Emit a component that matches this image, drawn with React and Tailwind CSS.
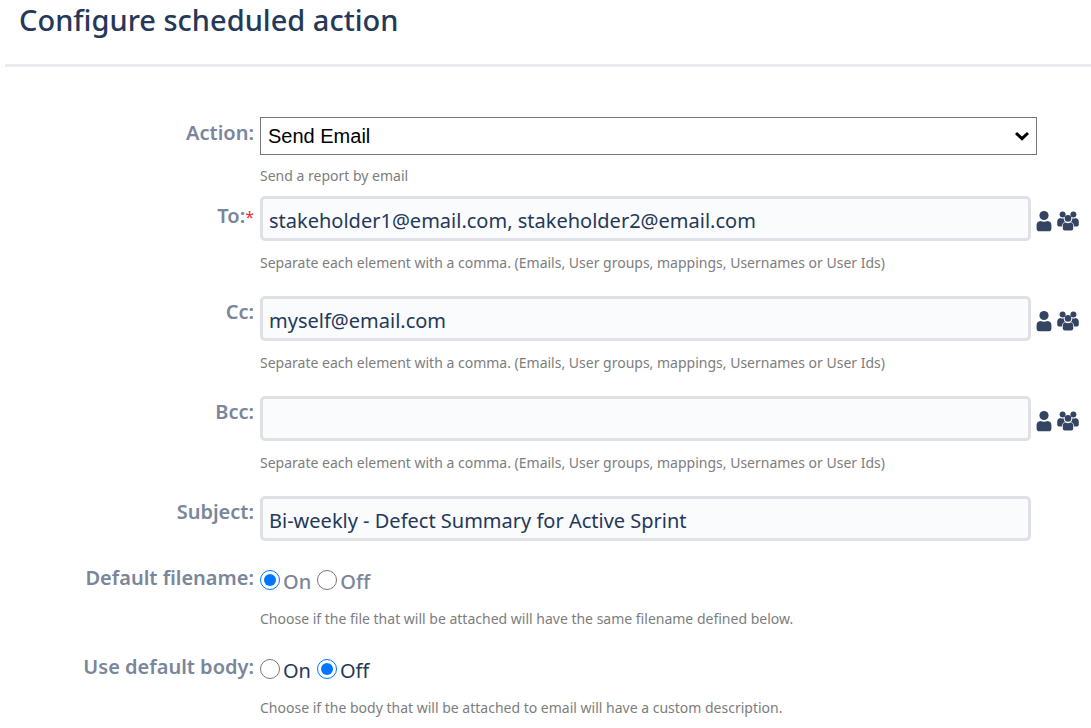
import { useState } from "react";

const ADDRESS_HINT =
  "Separate each element with a comma. (Emails, User groups, mappings, Usernames or User Ids)";

function UserIcon() {
  return (
    <svg width="16" height="22" viewBox="0 0 16 22" fill="currentColor" aria-hidden="true">
      <circle cx="8" cy="5.5" r="4.6" />
      <path d="M4.4 11 Q8 12.4 11.6 11 Q15.4 11.4 15.4 15 V18.4 Q15.4 21.2 12.6 21.2 H3.4 Q0.6 21.2 0.6 18.4 V15 Q0.6 11.4 4.4 11 Z" />
    </svg>
  );
}

function GroupIcon() {
  return (
    <svg width="22" height="22" viewBox="0 0 22 22" fill="currentColor" aria-hidden="true">
      <circle cx="5.6" cy="4.4" r="3" />
      <circle cx="16.4" cy="4.4" r="3" />
      <path d="M3.4 8 Q4.8 8.9 6.6 8.2 Q6.8 11 8.2 12 Q5 12.8 5 16.6 H2 Q0.2 16.6 0.2 14.6 V12 Q0.2 8.6 3.4 8 Z" />
      <path d="M18.6 8 Q17.2 8.9 15.4 8.2 Q15.2 11 13.8 12 Q17 12.8 17 16.6 H20 Q21.8 16.6 21.8 14.6 V12 Q21.8 8.6 18.6 8 Z" />
      <circle cx="11" cy="8.4" r="3.3" />
      <path d="M8.4 12.6 Q11 14 13.6 12.6 Q16.2 13 16.2 16 V18.4 Q16.2 20.4 14.2 20.4 H7.8 Q5.8 20.4 5.8 18.4 V16 Q5.8 13 8.4 12.6 Z" />
    </svg>
  );
}

function Row({ children, className }) {
  return <div className={`grid grid-cols-[254px_1fr] gap-x-1.5 ${className || ""}`}>{children}</div>;
}

function Hint({ id, children }) {
  return (
    <p id={id} className="text-[14px] leading-5 text-[#7d7d7d]">
      {children}
    </p>
  );
}

function TextField({ id, label, required, defaultValue, hint, pickers, className }) {
  return (
    <Row className={className}>
      <label
        htmlFor={id}
        className={`text-right text-[20px] leading-7 font-semibold text-[#7a869a] ${required ? "pt-1.5" : "pt-0.5"}`}
      >
        {label}:{required && <span className="text-[16px] font-normal text-[#e5303c]">*</span>}
      </label>
      <div>
        <div className="flex items-center">
          <input
            id={id}
            type="text"
            required={required}
            defaultValue={defaultValue}
            aria-describedby={hint ? `${id}-hint` : undefined}
            className="h-[45px] min-w-0 flex-1 rounded-[5px] border-[3px] border-[#dfe1e6] bg-[#fafbfc] px-1.5 pt-1 text-[20px] text-[#253858] outline-none focus:border-[#4c9aff]"
          />
          <div className="flex w-[60px] gap-[5px] pt-1 pl-[5px] text-[#344563]">
            {pickers && (
              <>
                <button type="button" aria-label={`Pick a user for ${label}`}>
                  <UserIcon />
                </button>
                <button type="button" aria-label={`Pick a group for ${label}`}>
                  <GroupIcon />
                </button>
              </>
            )}
          </div>
        </div>
        {hint && (
          <div className="pt-3">
            <Hint id={`${id}-hint`}>{hint}</Hint>
          </div>
        )}
      </div>
    </Row>
  );
}

function RadioField({ id, label, value, onChange, hint, textClass, className }) {
  return (
    <Row className={className}>
      <span id={`${id}-label`} className="text-right text-[20px] leading-7 font-semibold text-[#7a869a]">
        {label}:
      </span>
      <div>
        <div role="radiogroup" aria-labelledby={`${id}-label`} className="flex gap-1.5 pt-1.5">
          {["On", "Off"].map((option) => (
            <label key={option} className={`flex items-start gap-[3px] text-[20px] leading-6 ${textClass}`}>
              <input
                type="radio"
                name={id}
                value={option}
                checked={value === option}
                onChange={() => onChange(option)}
                className="size-5"
              />
              {option}
            </label>
          ))}
        </div>
        <div className="pt-[15px]">
          <Hint>{hint}</Hint>
        </div>
      </div>
    </Row>
  );
}

export default function App() {
  const [defaultFilename, setDefaultFilename] = useState("On");
  const [defaultBody, setDefaultBody] = useState("Off");

  return (
    <main className="bg-white font-['Noto_Sans',sans-serif]">
      <header className="ml-[5px] border-b-[3px] border-[#ebecf0] px-3.5 pb-[26px] pt-0.5">
        <h1 className="text-[29px] leading-9 font-medium text-[#253858]">Configure scheduled action</h1>
      </header>

      <form className="pt-[50px]">
        <Row>
          <label htmlFor="action" className="pt-0.5 text-right text-[20px] leading-7 font-semibold text-[#7a869a]">
            Action:
          </label>
          <div>
            <div className="relative mr-[54px]">
              <select
                id="action"
                className="h-[38px] w-full appearance-none border border-[#767676] bg-white px-[7px] font-['Liberation_Sans',sans-serif] text-[20px] text-black"
              >
                <option>Send Email</option>
              </select>
              <svg
                className="pointer-events-none absolute top-3 right-2 h-3.5 w-3.5"
                viewBox="0 0 14 14"
                fill="none"
                stroke="black"
                strokeWidth="3"
                aria-hidden="true"
              >
                <path d="M1 4 L7 9.6 L13 4" />
              </svg>
            </div>
            <div className="pt-[11px] pb-2.5">
              <Hint>Send a report by email</Hint>
            </div>
          </div>
        </Row>

        <TextField
          id="to"
          label="To"
          required
          defaultValue="stakeholder1@email.com, stakeholder2@email.com"
          hint={ADDRESS_HINT}
          pickers
          className="pb-[23px]"
        />
        <TextField id="cc" label="Cc" defaultValue="myself@email.com" hint={ADDRESS_HINT} pickers className="pb-[23px]" />
        <TextField id="bcc" label="Bcc" hint={ADDRESS_HINT} pickers className="pb-[23px]" />
        <TextField
          id="subject"
          label="Subject"
          defaultValue="Bi-weekly - Defect Summary for Active Sprint"
          className="pb-[23px]"
        />

        <RadioField
          id="default-filename"
          label="Default filename"
          value={defaultFilename}
          onChange={setDefaultFilename}
          hint="Choose if the file that will be attached will have the same filename defined below."
          textClass="font-medium text-[#7a869a]"
          className="pb-6"
        />
        <RadioField
          id="default-body"
          label="Use default body"
          value={defaultBody}
          onChange={setDefaultBody}
          hint="Choose if the body that will be attached to email will have a custom description."
          textClass="text-[#253858]"
        />
      </form>
    </main>
  );
}
